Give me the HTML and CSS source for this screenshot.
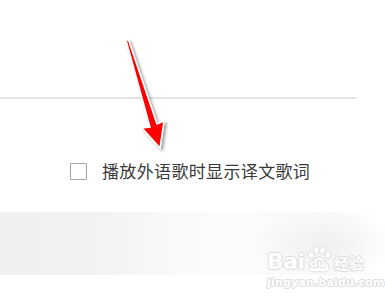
FILE: index.html
```html
<!DOCTYPE html>
<html lang="zh">
<head>
<meta charset="utf-8">
<link rel="stylesheet" href="styles.css">
</head>
<body>
<div class="page">
  <div class="divider"></div>
  <label class="option">
    <span class="box"></span>
    <span class="label-text">播放外语歌时显示译文歌词</span>
  </label>
  <div class="band"></div>
  <svg class="arrow" width="385" height="300" viewBox="0 0 385 300">
    <defs>
      <filter id="sh" x="-50%" y="-50%" width="200%" height="200%">
        <feDropShadow dx="2" dy="2" stdDeviation="1.8" flood-color="#000" flood-opacity="0.4"/>
      </filter>
    </defs>
    <polygon points="126,40 128.5,40 157,124 164,121 160,148 142,128 150,127" fill="#ff0000" stroke="#ffffff" stroke-width="1.5" stroke-linejoin="miter" filter="url(#sh)"/>
  </svg>
  <div class="watermark">
    <div class="wm-top">
      <span class="wm-bai">Bai</span>
      <span class="wm-paw">
        <svg width="28" height="28" viewBox="0 0 28 28">
          <g fill="#ffffff" stroke="#dedede" stroke-width="1">
            <ellipse cx="6" cy="9" rx="3" ry="3.6"/>
            <ellipse cx="11.5" cy="4.5" rx="3" ry="3.6"/>
            <ellipse cx="17.5" cy="4.5" rx="3" ry="3.6"/>
            <ellipse cx="23" cy="9" rx="3" ry="3.6"/>
            <path d="M14 11 C9 11 4 18 4 22 C4 26 9 26.5 14 25.5 C19 26.5 24 26 24 22 C24 18 19 11 14 11 Z"/>
          </g>
        </svg>
        <span class="wm-du">du</span>
      </span>
      <span class="wm-jy">经验</span>
    </div>
    <div class="wm-url">jingyan.baidu.com</div>
  </div>
</div>
</body>
</html>
```
FILE: styles.css
```css
html, body {
  margin: 0;
  padding: 0;
  background: #ffffff;
}
.page {
  position: relative;
  width: 385px;
  height: 300px;
  overflow: hidden;
  padding-top: 97px;
  box-sizing: border-box;
  font-family: "Noto Sans CJK SC", "Noto Sans", sans-serif;
}
.divider {
  width: 356px;
  height: 2px;
  background: #e2e2e2;
}
.option {
  display: flex;
  align-items: center;
  margin-top: 60px;
  padding-left: 70px;
  height: 24px;
}
.box {
  box-sizing: border-box;
  width: 17px;
  height: 17px;
  border: 1.5px solid #a3a3a3;
  border-radius: 1px;
  flex: none;
}
.label-text {
  margin-left: 15px;
  font-size: 17px;
  letter-spacing: 0.35px;
  color: #3a3a3a;
  line-height: 24px;
}
.band {
  margin-top: 29px;
  height: 63px;
  background:
    radial-gradient(ellipse 70px 32px at 325px 32px, rgba(238,238,239,0.8), rgba(255,255,255,0) 100%),
    linear-gradient(90deg, #eef0f2 0%, #eff1f2 22%, #f7f8f9 42%, #fafbfb 58%, #f9fafa 72%, #f8f9f9 86%, #ffffff 99%);
}
.arrow {
  position: absolute;
  left: 0;
  top: 0;
}
.watermark {
  position: absolute;
  left: 267px;
  top: 244px;
  color: #ffffff;
  font-family: "DejaVu Sans", sans-serif;
}
.wm-top {
  display: flex;
  align-items: flex-end;
  height: 30px;
}
.wm-bai, .wm-jy, .wm-url, .wm-du {
  text-shadow: 1px 0 0 #dcdcdc, -1px 0 0 #dcdcdc, 0 1px 0 #dcdcdc, 0 -1px 0 #dcdcdc;
}
.wm-bai {
  font-size: 22px;
  font-weight: bold;
  line-height: 24px;
  letter-spacing: -0.5px;
}
.wm-paw {
  position: relative;
  width: 28px;
  height: 28px;
}
.wm-du {
  position: absolute;
  left: 5px;
  top: 11px;
  font-size: 11px;
  font-weight: bold;
  color: #ffffff;
}
.wm-jy {
  font-family: "Noto Sans CJK SC", sans-serif;
  font-size: 15px;
  font-weight: bold;
  line-height: 22px;
  margin-left: 1px;
}
.wm-url {
  margin-top: 2px;
  font-size: 11px;
  font-weight: bold;
  letter-spacing: 0.2px;
  line-height: 14px;
}
```
